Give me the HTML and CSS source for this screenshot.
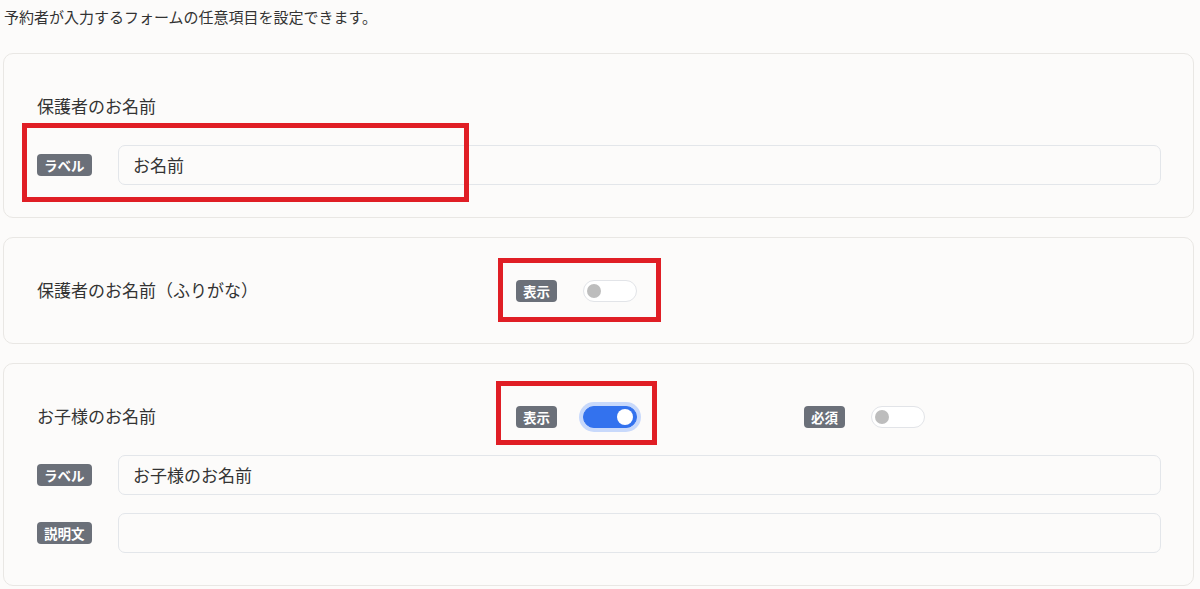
FILE: index.html
```html
<!DOCTYPE html>
<html>
<head>
    <title>フォーム項目設定</title>
    <link rel="stylesheet" href="styles.css">
</head>
<body>

    <p class="intro">予約者が入力するフォームの任意項目を設定できます。</p>

    <div class="card">
        <div class="head">
            <div class="title">保護者のお名前</div>
        </div>
        <div class="fields">
            <div class="field">
                <span class="badge">ラベル</span>
                <div class="input">お名前</div>
            </div>
        </div>
        <div class="mark mark-1"></div>
    </div>

    <div class="card">
        <div class="head">
            <div class="title">保護者のお名前（ふりがな）</div>
            <div class="opt">
                <span class="badge">表示</span>
                <span class="toggle"></span>
            </div>
        </div>
        <div class="mark mark-2"></div>
    </div>

    <div class="card">
        <div class="head">
            <div class="title">お子様のお名前</div>
            <div class="opt">
                <span class="badge">表示</span>
                <span class="toggle on"></span>
            </div>
            <div class="opt">
                <span class="badge">必須</span>
                <span class="toggle"></span>
            </div>
        </div>
        <div class="fields">
            <div class="field">
                <span class="badge">ラベル</span>
                <div class="input">お子様のお名前</div>
            </div>
            <div class="field">
                <span class="badge">説明文</span>
                <div class="input"></div>
            </div>
        </div>
        <div class="mark mark-3"></div>
    </div>

</body>
</html>
```

FILE: styles.css
```css
body {
    margin: 0;
    padding: 0 6px 0 3px;
    background-color: #fcfbfa;
    color: #333;
    font-family: "Noto Sans CJK JP", "Noto Sans", sans-serif;
}
.intro {
    margin: 0 0 25px;
    padding: 6px 0 0 1px;
    font-size: 15px;
    line-height: 22px;
}
.card {
    position: relative;
    border: 1px solid #e9e7e4;
    border-radius: 10px;
    padding: 33px 32px 32px 33px;
    margin-bottom: 19px;
}
.head {
    display: grid;
    grid-template-columns: 479px 288px auto;
    align-items: center;
    height: 40px;
}
.title {
    font-size: 17px;
    padding-bottom: 3px;
}
.opt {
    display: flex;
    align-items: center;
    gap: 26px;
}
.badge {
    display: inline-block;
    background-color: #6b7079;
    color: #fff;
    font-size: 13.5px;
    font-weight: bold;
    line-height: 22px;
    padding: 0 7px;
    border-radius: 4px;
}
.fields {
    display: flex;
    flex-direction: column;
    gap: 18px;
    margin-top: 18px;
}
.field {
    display: grid;
    grid-template-columns: 81px 1fr;
    align-items: center;
}
.field .badge {
    justify-self: start;
}
.input {
    height: 40px;
    box-sizing: border-box;
    border: 1px solid #e3e6ea;
    border-radius: 7px;
    padding: 0 14px;
    font-size: 17px;
    line-height: 37px;
}
.toggle {
    position: relative;
    display: inline-block;
    width: 54px;
    height: 22px;
    box-sizing: border-box;
    border: 1px solid #e2e4e8;
    border-radius: 11px;
    background: #fff;
}
.toggle::after {
    content: "";
    position: absolute;
    top: 3px;
    left: 3px;
    width: 14px;
    height: 14px;
    border-radius: 50%;
    background: #bdbdbd;
}
.toggle.on {
    background: #3372ee;
    border-color: #3372ee;
    box-shadow: 0 0 0 4px #c8d9fb;
}
.toggle.on::after {
    left: auto;
    right: 3px;
    top: 2px;
    width: 16px;
    height: 16px;
    background: #fff;
}
.mark {
    position: absolute;
    box-sizing: border-box;
    border: 5px solid #e01e25;
}
.mark-1 {
    left: 18px;
    top: 69px;
    width: 447px;
    height: 79px;
}
.mark-2 {
    left: 494px;
    top: 20px;
    width: 163px;
    height: 64px;
}
.mark-3 {
    left: 492px;
    top: 17px;
    width: 161px;
    height: 64px;
}
```
